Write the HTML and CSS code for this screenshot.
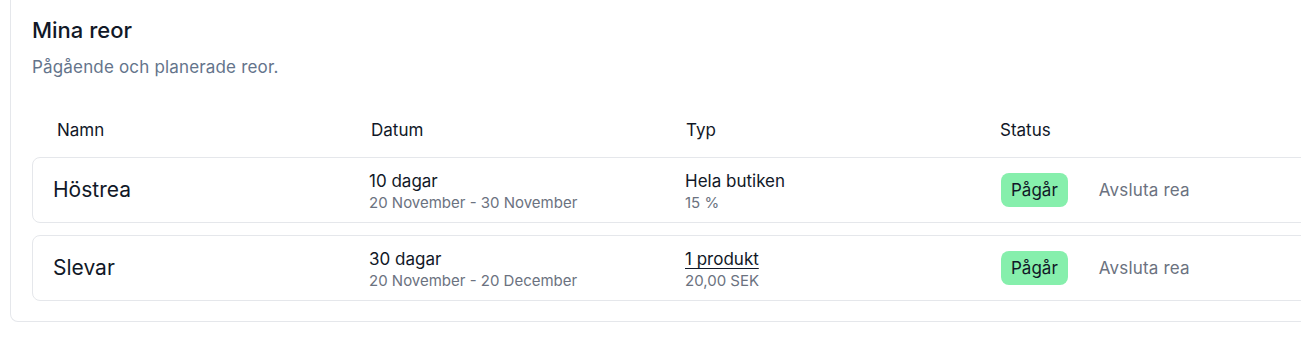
FILE: index.html
```html
<!DOCTYPE html>
<html lang="sv">
<head>
    <meta charset="UTF-8">
    <meta name="viewport" content="width=device-width, initial-scale=1.0">
    <title>Mina reor</title>
    <link rel="stylesheet" href="styles.css">
</head>
<body>

<div class="card">
    <h2 class="card-title">Mina reor</h2>
    <p class="card-sub">Pågående och planerade reor.</p>

    <div class="list-head">
        <div>Namn</div>
        <div>Datum</div>
        <div>Typ</div>
        <div>Status</div>
    </div>

    <div class="sale-row">
        <div class="sale-name">Höstrea</div>
        <div>
            <div class="main">10 dagar</div>
            <div class="sub">20 November - 30 November</div>
        </div>
        <div>
            <div class="main">Hela butiken</div>
            <div class="sub">15 %</div>
        </div>
        <div class="status">
            <span class="badge">Pågår</span>
            <a href="#" class="end-link">Avsluta rea</a>
        </div>
    </div>

    <div class="sale-row">
        <div class="sale-name">Slevar</div>
        <div>
            <div class="main">30 dagar</div>
            <div class="sub">20 November - 20 December</div>
        </div>
        <div>
            <a href="#" class="main product-link">1 produkt</a>
            <div class="sub">20,00 SEK</div>
        </div>
        <div class="status">
            <span class="badge">Pågår</span>
            <a href="#" class="end-link">Avsluta rea</a>
        </div>
    </div>
</div>

</body>
</html>
```

FILE: styles.css
```css
body {
    font-family: Inter, "Noto Sans", sans-serif;
    margin: 0;
    padding: 0;
    background: white;
    color: #111827;
    overflow: hidden;
}

.card {
    margin-left: 10px;
    width: 1330px;
    border: 1px solid #e5e7eb;
    border-top: none;
    border-radius: 0 0 8px 8px;
    padding: 16px 21px 20px;
    box-sizing: border-box;
}

.card-title {
    margin: 0;
    font-size: 22px;
    line-height: 28px;
    font-weight: 500;
}

.card-sub {
    margin: 11px 0 0;
    font-size: 17px;
    line-height: 24px;
    color: #64748b;
    letter-spacing: 0.01em;
}

.list-head {
    display: grid;
    grid-template-columns: 314px 315px 314px auto;
    padding: 0 0 0 25px;
    margin-top: 39px;
    margin-bottom: 15px;
    font-size: 17px;
    line-height: 24px;
}

.sale-row {
    display: grid;
    grid-template-columns: 316px 316px 316px auto;
    align-items: center;
    height: 66px;
    box-sizing: border-box;
    padding: 0 20px;
    border: 1px solid #e5e7eb;
    border-radius: 8px;
    margin-bottom: 12px;
}

.sale-row:last-child {
    margin-bottom: 0;
}

.sale-name {
    font-size: 21px;
    line-height: 28px;
}

.main {
    display: block;
    font-size: 17px;
    line-height: 24px;
    margin-top: 2px;
    color: #111827;
}

.product-link {
    text-decoration: underline;
    text-underline-offset: 3px;
}

.sub {
    font-size: 15px;
    line-height: 20px;
    color: #6b7280;
}

.status {
    display: flex;
    align-items: center;
    gap: 31px;
}

.badge {
    background-color: #86efac;
    padding: 5px 10px;
    border-radius: 8px;
    font-size: 17px;
    line-height: 24px;
}

.end-link {
    color: #6b7280;
    text-decoration: none;
    font-size: 17px;
    line-height: 24px;
    letter-spacing: 0.01em;
}
```
